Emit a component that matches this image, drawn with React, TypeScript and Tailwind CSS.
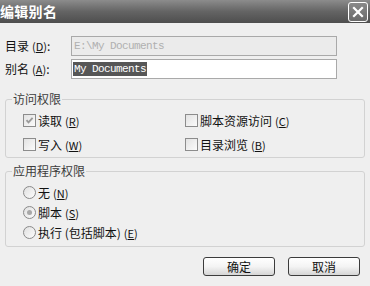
import type { ReactNode } from 'react';

const CJK = "font-['Noto_Sans_CJK_SC','Noto_Sans',sans-serif]";

function Key({ k }: { k: string }) {
  return (
    <span className="ml-[3px] text-[11px]">
      (<span className="underline underline-offset-1">{k}</span>)
    </span>
  );
}

function Checkbox({ checked, label, k }: { checked?: boolean; label: string; k: string }) {
  return (
    <div className="flex h-[13px] items-center gap-[2px]">
      <span className="relative h-[13px] w-[13px] shrink-0 border border-[#8c8c8c] bg-gradient-to-br from-[#e2e2e2] to-[#fbfbfb]">
        {checked && (
          <svg viewBox="0 0 11 11" className="absolute inset-0 h-[11px] w-[11px]">
            <path d="M2.5 5.2 L4.5 7.4 L8.6 2.8" fill="none" stroke="#9a9a9a" strokeWidth="1.8" />
          </svg>
        )}
      </span>
      <span className="whitespace-nowrap text-[12px] leading-[13px] text-[#111]">
        {label}
        <Key k={k} />
      </span>
    </div>
  );
}

function Radio({ checked, label, k }: { checked?: boolean; label: ReactNode; k: string }) {
  return (
    <div className="flex h-[13px] items-center gap-[2px]">
      <span className="flex h-[13px] w-[13px] shrink-0 items-center justify-center rounded-full border border-[#8a8a8a] bg-gradient-to-br from-[#e0e0e0] to-[#fcfcfc]">
        {checked && <span className="h-[5px] w-[5px] rounded-full bg-[#a8a8a8]" />}
      </span>
      <span className="whitespace-nowrap text-[12px] leading-[13px] text-[#111]">
        {label}
        <Key k={k} />
      </span>
    </div>
  );
}

function Button({ children }: { children: ReactNode }) {
  return (
    <button className="flex h-[19px] w-[72px] items-center justify-center rounded-[3px] border border-[#3c3c3c] bg-gradient-to-b from-[#ffffff] via-[#f4f4f4] to-[#d6d6d6] text-[12px] leading-none text-[#111]">
      {children}
    </button>
  );
}

export default function App() {
  return (
    <div className={`h-[286px] w-[370px] overflow-hidden bg-[#efefef] ${CJK}`}>
      <div className="flex h-[23px] items-center justify-between bg-gradient-to-b from-[#8c8c8c] via-[#646464] to-[#4e4e4e] pr-[2px]">
        <span className="text-[14px] font-bold tracking-[0.3px] text-white">编辑别名</span>
        <span className="flex h-[20px] w-[20px] items-center justify-center rounded-[3px] border border-white bg-gradient-to-b from-[#8a8a8a] to-[#6a6a6a]">
          <svg viewBox="0 0 14 14" className="h-[14px] w-[14px]">
            <path d="M3 3 L11 11 M11 3 L3 11" stroke="white" strokeWidth="2.2" strokeLinecap="square" />
          </svg>
        </span>
      </div>

      <div className="px-[5px]">
        <div className="mt-[13px] flex items-center">
          <span className="w-[66px] text-[12px] text-[#111]">
            目录<Key k="D" />:
          </span>
          <div className="flex h-[20px] w-[266px] items-center border border-[#a9a9a9] bg-[#ebebeb] pl-[2px] font-['Liberation_Mono',monospace] text-[11px] tracking-[-0.6px] text-[#b0b0b0]">
            E:\My Documents
          </div>
        </div>
        <div className="mt-[3px] flex items-center">
          <span className="w-[66px] text-[12px] text-[#111]">
            别名<Key k="A" />:
          </span>
          <div className="flex h-[20px] w-[266px] items-center border border-[#a9a9a9] bg-white pl-[1px]">
            <span className="bg-[#565656] px-[1px] font-['Liberation_Mono',monospace] text-[11px] leading-[14px] tracking-[-0.6px] text-white">
              My Documents
            </span>
          </div>
        </div>

        <fieldset className="mt-[13px] rounded-[3px] border border-[#d2d2d2] px-0 pb-[6px] pt-[8px]">
          <legend className="ml-[6px] px-[1px] text-[12px] leading-[14px] text-[#3c3c3c]">访问权限</legend>
          <div className="grid grid-cols-[162px_1fr] gap-y-[11px] pl-[17px]">
            <Checkbox checked label="读取" k="R" />
            <Checkbox label="脚本资源访问" k="C" />
            <Checkbox label="写入" k="W" />
            <Checkbox label="目录浏览" k="B" />
          </div>
        </fieldset>

        <fieldset className="mt-[6px] rounded-[3px] border border-[#d2d2d2] px-0 pb-[7px] pt-[8px]">
          <legend className="ml-[6px] px-[1px] text-[12px] leading-[14px] text-[#3c3c3c]">应用程序权限</legend>
          <div className="flex flex-col gap-y-[7px] pl-[17px]">
            <Radio label="无" k="N" />
            <Radio checked label="脚本" k="S" />
            <Radio label="执行 (包括脚本)" k="E" />
          </div>
        </fieldset>

        <div className="mt-[10px] flex justify-end gap-[13px] pr-[5px]">
          <Button>确定</Button>
          <Button>取消</Button>
        </div>
      </div>
    </div>
  );
}
